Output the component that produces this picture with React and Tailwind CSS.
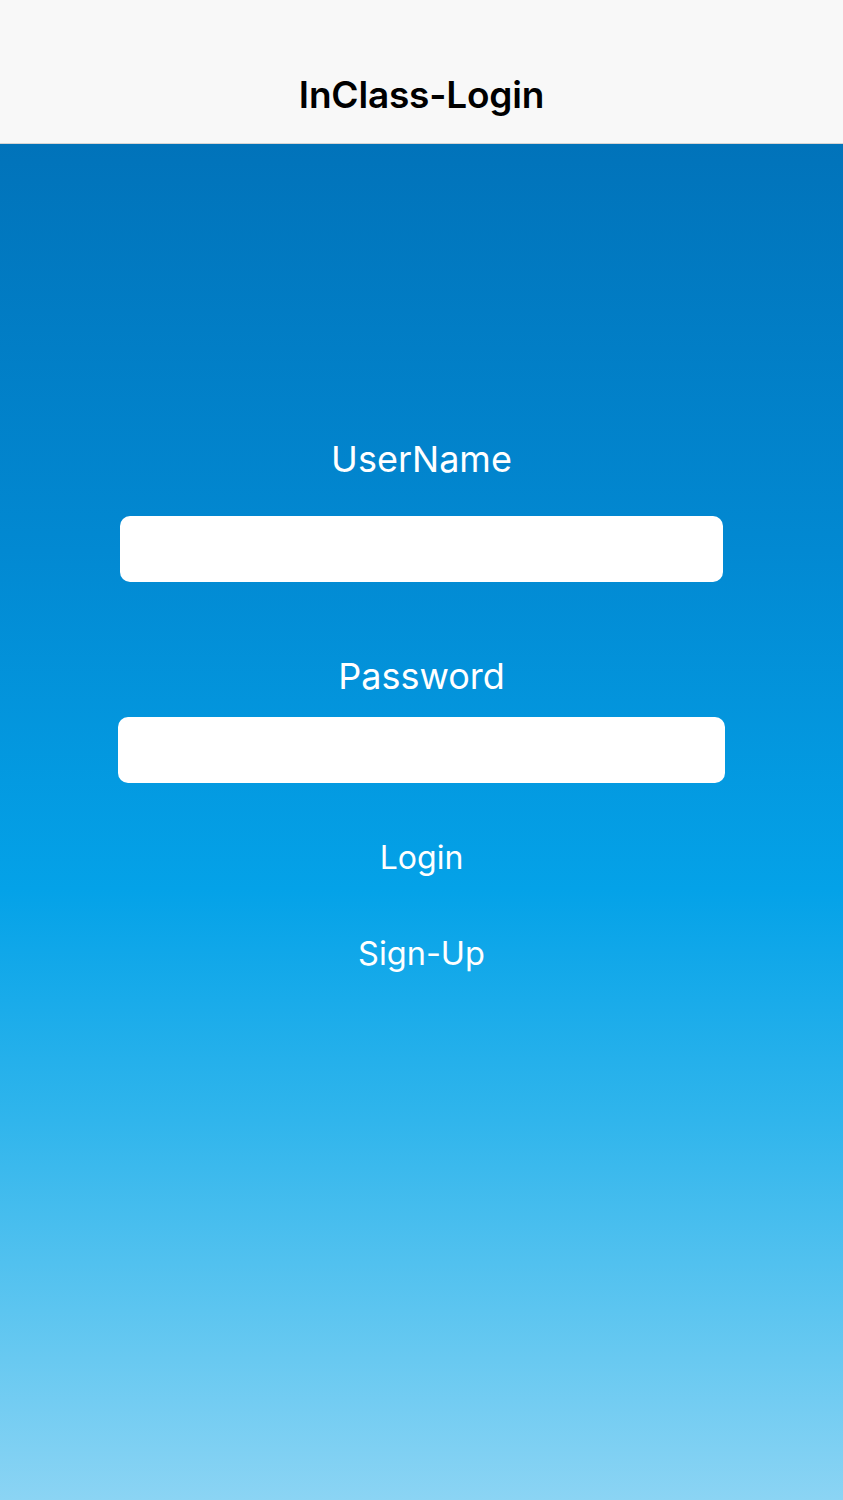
import React from 'react';

const App = () => {
  return (
    <div className="min-h-[1500px] w-full flex flex-col font-['Inter','Roboto',sans-serif]">
      <header className="h-[144px] bg-[#f8f8f8] border-b border-[#d4d4d4] flex items-end justify-center pb-[24px]">
        <h1 className="text-[37px] leading-[48px] font-semibold text-black tracking-[-0.2px]">InClass-Login</h1>
      </header>

      <main className="flex-1 flex flex-col items-center bg-[linear-gradient(to_bottom,#0173ba_0%,#0289d2_30%,#04a2e8_55%,#30b5ec_72%,#5cc5f0_86%,#8bd4f4_100%)] pt-[293px]">
        <label className="text-[36px] leading-[44px] text-white">UserName</label>
        <input className="mt-[35px] w-[603px] h-[66px] bg-white rounded-[10px] outline-none px-3" />

        <label className="mt-[72px] text-[36px] leading-[44px] text-white">Password</label>
        <input type="password" className="mt-[19px] w-[607px] h-[66px] bg-white rounded-[10px] outline-none px-3" />

        <button className="mt-[55px] text-[32px] leading-[40px] text-white">Login</button>
        <button className="mt-[56px] text-[32.5px] leading-[40px] text-white">Sign-Up</button>
      </main>
    </div>
  );
};

export default App;
